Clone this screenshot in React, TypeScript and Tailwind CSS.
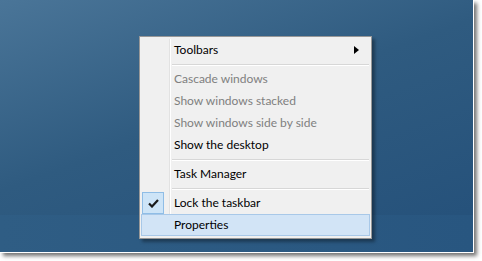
import React from "react";

const font = { fontFamily: 'Lato, "Noto Sans", sans-serif' };

function Sep() {
  return (
    <div className="flex h-[7px] items-center">
      <div className="w-[30px]" />
      <div className="flex-1 flex-col">
        <div className="h-px bg-[#d7d7d7]" />
        <div className="h-px bg-white" />
      </div>
    </div>
  );
}

function Item({
  label,
  disabled,
  arrow,
  checked,
  hover,
}: {
  label: string;
  disabled?: boolean;
  arrow?: boolean;
  checked?: boolean;
  hover?: boolean;
}) {
  return (
    <div
      className={
        "relative flex h-[22px] items-center " +
        (hover ? "-mx-px border border-[#a8c8e8] bg-[#d2e4f6]" : "")
      }
    >
      <div className="flex w-[30px] items-center">
        {checked && (
          <div className="flex h-[22px] w-[22px] items-center justify-center border border-[#8fbde6] bg-[#cde4f7]">
            <svg width="11" height="9" viewBox="0 0 11 9">
              <path d="M1 4.5 L4 7.5 L10 1" stroke="#1a1a1a" strokeWidth="2.2" fill="none" />
            </svg>
          </div>
        )}
      </div>
      <div className={"pl-[2px] text-[12px] leading-none " + (disabled ? "text-[#7f7f7f]" : "text-black")}>{label}</div>
      {arrow && (
        <svg className="absolute right-[10px] top-[7px]" width="5" height="8" viewBox="0 0 5 8">
          <path d="M0 0 L5 4 L0 8 Z" fill="#000" />
        </svg>
      )}
    </div>
  );
}

export default function App() {
  return (
    <div className="h-[261px] w-[482px] overflow-hidden bg-white" style={font}>
      <div className="relative flex h-[253px] w-[474px] flex-col border-b border-r border-white bg-[linear-gradient(160deg,#4a7598_0%,#2f5b80_45%,#24507a_100%)] shadow-[3px_3px_4px_rgba(0,0,0,0.55)]">
        <div className="flex-1" />
        <div className="h-[37px] bg-[linear-gradient(90deg,#2f5d84,#285680)]" />
        <div className="absolute left-[139px] top-[36px] w-[233px] border border-[#979797] bg-[#f0f0f0] p-[2px] shadow-[3px_3px_3px_rgba(0,0,0,0.35)]">
          <div className="absolute bottom-[2px] left-[29px] top-[2px] w-px bg-[#e2e2e2]" />
          <div className="absolute bottom-[2px] left-[30px] top-[2px] w-px bg-white" />
          <Item label="Toolbars" arrow />
          <Sep />
          <Item label="Cascade windows" disabled />
          <Item label="Show windows stacked" disabled />
          <Item label="Show windows side by side" disabled />
          <Item label="Show the desktop" />
          <Sep />
          <Item label="Task Manager" />
          <Sep />
          <Item label="Lock the taskbar" checked />
          <Item label="Properties" hover />
        </div>
      </div>
    </div>
  );
}
